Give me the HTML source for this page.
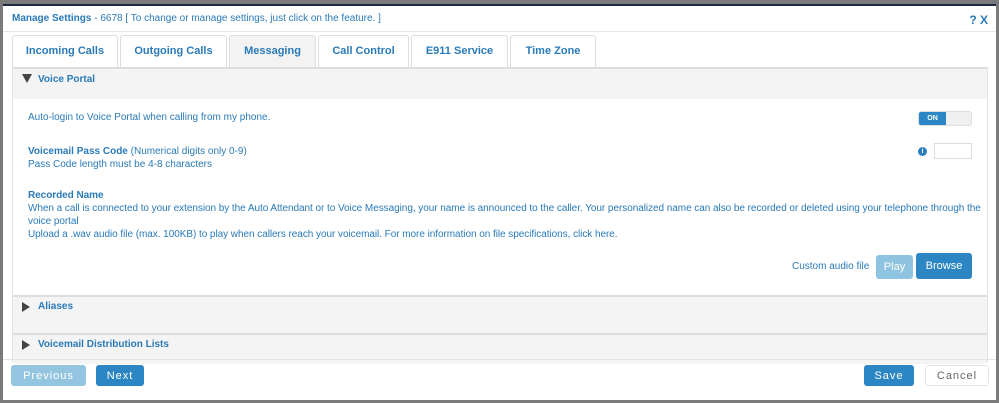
<!DOCTYPE html>
<html><head><style>
*{box-sizing:border-box;margin:0;padding:0}
body{width:999px;height:403px;background:#7a7a7a;font-family:"Liberation Sans",Arial,sans-serif;color:#2a7ab8;position:relative;overflow:hidden}
.dlg{position:absolute;left:3px;top:4px;width:993px;height:396px;background:#fff;border-top:2px solid #1c2a3e}
.title{position:absolute;left:9px;top:7px;font-size:10px}
.qx{position:absolute;right:8px;top:7px;font-size:12px;font-weight:bold}
.hr{position:absolute;left:0;right:0;top:25px;border-top:1px solid #e6e6e6}
.tab{position:absolute;top:29px;height:33px;border:1px solid #ddd;border-bottom:none;border-radius:3px 3px 0 0;background:#fff;font-size:11px;font-weight:bold;text-align:center;line-height:30px}
.tab.a{background:#f3f3f3}
.panel{position:absolute;left:9px;top:61px;width:976px;height:295px;border-top:2px solid #ddd;border-left:1px solid #e4e4e4;border-right:1px solid #e4e4e4}
.hdr{position:absolute;left:0;right:0;background:#f4f4f4;font-size:10px;font-weight:bold}
.hdr span{position:absolute;left:25px}
.tri{position:absolute;left:9px;width:0;height:0}
.t{position:absolute;font-size:10px;line-height:13px;white-space:nowrap}
.btn{position:absolute;border-radius:3px;font-size:11px;text-align:center;color:#fff;display:flex;align-items:center;justify-content:center}
</style></head><body>
<div class="dlg">
<div class="title"><b>Manage Settings</b> - 6678 [ To change or manage settings, just click on the feature. ]</div>
<div class="qx">? X</div>
<div class="hr"></div>
<div class="tab" style="left:9px;width:106px">Incoming Calls</div>
<div class="tab" style="left:117px;width:107px">Outgoing Calls</div>
<div class="tab a" style="left:226px;width:87px">Messaging</div>
<div class="tab" style="left:315px;width:91px">Call Control</div>
<div class="tab" style="left:408px;width:97px">E911 Service</div>
<div class="tab" style="left:507px;width:86px">Time Zone</div>
<div class="panel">
 <div class="hdr" style="top:0;height:30px"><div class="tri" style="top:5px;border-left:5px solid transparent;border-right:5px solid transparent;border-top:9px solid #444"></div><span style="top:5px">Voice Portal</span></div>
 <div class="t" style="left:15px;top:42px">Auto-login to Voice Portal when calling from my phone.</div>
 <div style="position:absolute;left:905px;top:42px;width:54px;height:15px;border-radius:3px;background:#f0f0f0;border:1px solid #ddd"><div style="width:27px;height:13px;background:#2b86c6;border-radius:2px 0 0 2px;color:#fff;font-size:7px;font-weight:bold;text-align:center;line-height:13px">ON</div></div>
 <div class="t" style="left:15px;top:76px"><b>Voicemail Pass Code</b> (Numerical digits only 0-9)<br>Pass Code length must be 4-8 characters</div>
 <div style="position:absolute;left:905px;top:78px;width:9px;height:9px;border-radius:50%;background:#2b7fc0;color:#fff;font-size:7px;font-weight:bold;text-align:center;line-height:9px">i</div>
 <div style="position:absolute;left:921px;top:74px;width:38px;height:16px;border:1px solid #ddd"></div>
 <div class="t" style="left:15px;top:120px;letter-spacing:-0.05px"><b>Recorded Name</b><br>When a call is connected to your extension by the Auto Attendant or to Voice Messaging, your name is announced to the caller. Your personalized name can also be recorded or deleted using your telephone through the<br>voice portal<br>Upload a .wav audio file (max. 100KB) to play when callers reach your voicemail. For more information on file specifications, click here.</div>
 <div class="t" style="left:779px;top:191px">Custom audio file</div>
 <div class="btn" style="left:863px;top:186px;width:37px;height:24px;background:#8fc4e0">Play</div>
 <div class="btn" style="left:903px;top:184px;width:56px;height:26px;background:#2b86c3">Browse</div>
 <div class="hdr" style="top:226px;height:38px;border-top:2px solid #ddd"><div class="tri" style="top:5px;border-top:5px solid transparent;border-bottom:5px solid transparent;border-left:8px solid #444"></div><span style="top:4px">Aliases</span></div>
 <div class="hdr" style="top:264px;height:31px;border-top:2px solid #ddd"><div class="tri" style="top:5px;border-top:5px solid transparent;border-bottom:5px solid transparent;border-left:8px solid #444"></div><span style="top:4px">Voicemail Distribution Lists</span></div>
</div>
<div style="position:absolute;left:0;right:0;top:353px;border-top:1px solid #e4e4e4"></div>
<div class="btn" style="left:8px;top:359px;width:75px;height:21px;background:#93c5e0;letter-spacing:1px">Previous</div>
<div class="btn" style="left:93px;top:359px;width:48px;height:21px;background:#2b86c3;letter-spacing:1px">Next</div>
<div class="btn" style="left:861px;top:359px;width:50px;height:21px;background:#2b86c3;letter-spacing:1px">Save</div>
<div class="btn" style="left:922px;top:359px;width:64px;height:21px;background:#fff;border:1px solid #e4e4e4;color:#666;letter-spacing:1px">Cancel</div>
</div>
</body></html>
